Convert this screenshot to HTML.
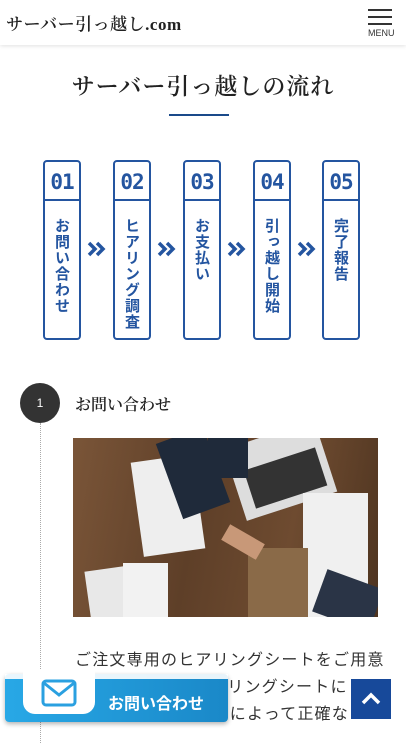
<!DOCTYPE html>
<html><head><meta charset="utf-8"><style>
*{margin:0;padding:0;box-sizing:border-box}
body{width:406px;height:731px;overflow:hidden;background:#fff;font-family:"Liberation Serif","Noto Serif CJK SC",serif;color:#222;position:relative}
.hdr{position:absolute;left:0;top:0;width:406px;height:45px;background:#fff;box-shadow:0 1px 4px rgba(0,0,0,.12);z-index:2}
.logo{position:absolute;left:6px;top:10px;font-size:17px;letter-spacing:.5px;font-weight:600}
.menu{position:absolute;left:368px;top:9px;width:24px}
.menu i{display:block;height:2px;background:#333;margin-bottom:5px}
.menu span{position:absolute;top:19px;left:0;font:9px "Liberation Sans",sans-serif;color:#333}
h1{position:absolute;top:68px;width:100%;text-align:center;font-size:23px;font-weight:600;letter-spacing:1px}
.ul{position:absolute;left:169px;top:114px;width:60px;height:2px;background:#1a4a8a}
.box{position:absolute;top:160px;width:38px;height:180px;border:2.5px solid #2455a0;border-radius:4px;color:#2455a0;font-family:"Liberation Sans","Noto Sans CJK JP",sans-serif}
.box .n{height:39px;border-bottom:2.5px solid #2455a0;text-align:center;font:bold 21px "DejaVu Sans Mono","Liberation Mono",monospace;line-height:40px;letter-spacing:-1px}
.box .t{writing-mode:vertical-rl;font-weight:bold;font-size:15px;margin:17px auto 0;letter-spacing:1px;height:120px;width:20px;text-align:left}
.arr{position:absolute;top:241px}
.circ{position:absolute;left:20px;top:383px;width:40px;height:40px;border-radius:50%;background:#333;color:#fff;font:12px "Liberation Sans",sans-serif;text-align:center;line-height:40px}
.dots{position:absolute;left:40px;top:423px;height:320px;border-left:1px dotted #aaa}
.h2{position:absolute;left:75px;top:392px;font-size:16px;font-weight:600}
.photo{position:absolute;left:73px;top:438px;width:305px;height:179px;background:linear-gradient(100deg,#7a5538,#5e3f28 40%,#6e4b30 70%,#4e3420);overflow:hidden}
.photo div{position:absolute}
.txt{position:absolute;left:75px;top:647px;width:330px;font-size:16px;line-height:27px;letter-spacing:1.2px;font-family:"Liberation Sans","Noto Sans CJK JP",sans-serif;color:#333}
.btn{position:absolute;left:5px;top:674px;width:223px;height:48px;border-radius:4px;background:linear-gradient(90deg,#28a8e6,#1a88c8);box-shadow:0 2px 5px rgba(0,0,0,.3);z-index:3}
.btn .tab{position:absolute;left:18px;top:-4px;width:72px;height:44px;background:#fff;border-radius:0 0 12px 12px}
.btn .stripe{position:absolute;left:0;top:0;width:223px;height:5px;background:#fff;opacity:.9}
.btn b{position:absolute;left:103px;top:16px;color:#fff;font:bold 16px "Liberation Sans","Noto Sans CJK JP",sans-serif}
.top{position:absolute;left:351px;top:679px;width:40px;height:40px;background:#17499a;z-index:3}
</style></head><body>
<div class="hdr"><div class="logo">サーバー引っ越し.com</div>
<div class="menu"><i></i><i></i><i></i><span>MENU</span></div></div>
<h1>サーバー引っ越しの流れ</h1><div class="ul"></div>
<div class="box" style="left:43px"><div class="n">01</div><div class="t">お問い合わせ</div></div>
<div class="box" style="left:113px"><div class="n">02</div><div class="t">ヒアリング調査</div></div>
<div class="box" style="left:183px"><div class="n">03</div><div class="t">お支払い</div></div>
<div class="box" style="left:253px"><div class="n">04</div><div class="t">引っ越し開始</div></div>
<div class="box" style="left:322px"><div class="n">05</div><div class="t">完了報告</div></div>
<svg class="arr" style="left:87px" width="20" height="16"><path d="M2 2 L8 8 L2 14 M10 2 L16 8 L10 14" fill="none" stroke="#2455a0" stroke-width="3.5"/></svg>
<svg class="arr" style="left:157px" width="20" height="16"><path d="M2 2 L8 8 L2 14 M10 2 L16 8 L10 14" fill="none" stroke="#2455a0" stroke-width="3.5"/></svg>
<svg class="arr" style="left:227px" width="20" height="16"><path d="M2 2 L8 8 L2 14 M10 2 L16 8 L10 14" fill="none" stroke="#2455a0" stroke-width="3.5"/></svg>
<svg class="arr" style="left:297px" width="20" height="16"><path d="M2 2 L8 8 L2 14 M10 2 L16 8 L10 14" fill="none" stroke="#2455a0" stroke-width="3.5"/></svg>
<div class="circ">1</div><div class="dots"></div>
<div class="h2">お問い合わせ</div>
<div class="photo">
<div style="left:64px;top:20px;width:62px;height:95px;background:#eee;transform:rotate(-8deg)"></div>
<div style="left:160px;top:-5px;width:95px;height:75px;background:#ddd;transform:rotate(-18deg)"></div>
<div style="left:175px;top:20px;width:75px;height:40px;background:#333;transform:rotate(-18deg)"></div>
<div style="left:95px;top:-5px;width:50px;height:80px;background:#1f2a3a;transform:rotate(-20deg)"></div>
<div style="left:135px;top:-5px;width:40px;height:45px;background:#1f2a3a"></div>
<div style="left:230px;top:55px;width:65px;height:125px;background:#f0f0f0"></div>
<div style="left:175px;top:110px;width:60px;height:70px;background:#8a6a48"></div>
<div style="left:245px;top:140px;width:60px;height:45px;background:#2a3446;transform:rotate(20deg)"></div>
<div style="left:15px;top:130px;width:50px;height:55px;background:#e8e8e8;transform:rotate(-8deg)"></div>
<div style="left:50px;top:125px;width:45px;height:55px;background:#f2f2f2"></div>
<div style="left:150px;top:95px;width:40px;height:18px;background:#c89878;transform:rotate(30deg)"></div>
</div>
<div class="txt">ご注文専用のヒアリングシートをご用意<br>しております。ヒアリングシートに<br>ご記入いただくことによって正確な</div>
<div class="btn"><div class="stripe"></div><div class="tab"><svg width="36" height="28" viewBox="0 0 36 28" style="position:absolute;left:18px;top:9px"><rect x="2" y="2" width="32" height="24" rx="3" fill="none" stroke="#2aa0e0" stroke-width="3"/><path d="M3 4 L18 16 L33 4" fill="none" stroke="#2aa0e0" stroke-width="3"/></svg></div><b>お問い合わせ</b></div>
<div class="top"><svg width="40" height="40"><path d="M12 24 L20 16 L28 24" fill="none" stroke="#fff" stroke-width="3.5"/></svg></div>
</body></html>
